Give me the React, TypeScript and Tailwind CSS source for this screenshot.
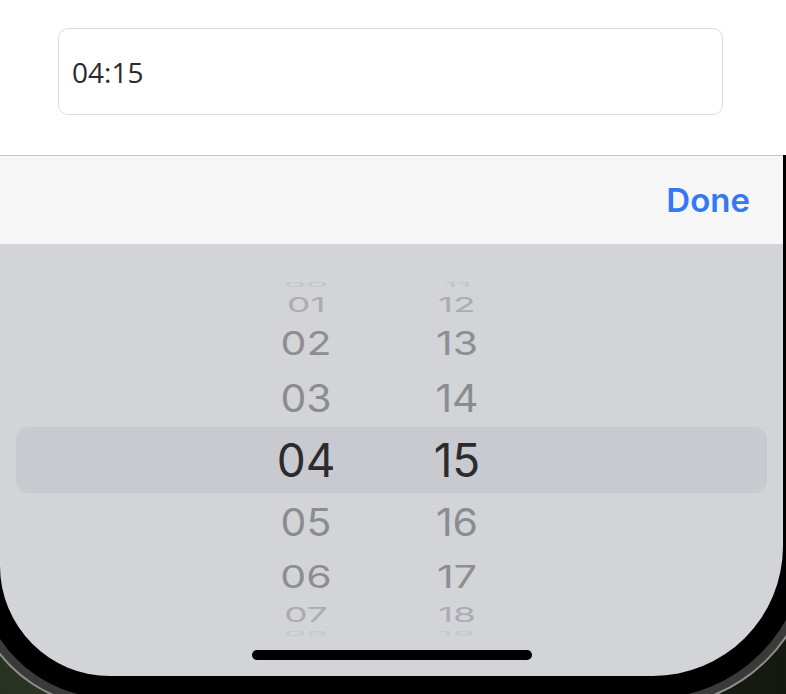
import React from "react";

type Row = { h: string; size: string; tf: string; color: string; a: string; b: string; sel?: boolean };

const rows: Row[] = [
  { h: "h-[12px]", size: "text-[38px]", tf: "scale-x-[0.92] scale-y-[0.16]", color: "text-[#c3c4c8]", a: "00", b: "11" },
  { h: "h-[26px]", size: "text-[39px]", tf: "scale-x-[0.95] scale-y-[0.52]", color: "text-[#abacb0]", a: "01", b: "12" },
  { h: "h-[52px]", size: "text-[41px]", tf: "scale-y-[0.79]", color: "text-[#8d8e92]", a: "02", b: "13" },
  { h: "h-[58px]", size: "text-[41px]", tf: "scale-y-[0.93]", color: "text-[#8b8c90]", a: "03", b: "14" },
  { h: "h-[66px]", size: "text-[46px]", tf: "", color: "text-[#2c2c2e]", a: "04", b: "15", sel: true },
  { h: "h-[58px]", size: "text-[41px]", tf: "scale-y-[0.93]", color: "text-[#8b8c90]", a: "05", b: "16" },
  { h: "h-[50px]", size: "text-[41px]", tf: "scale-y-[0.77]", color: "text-[#8d8e92]", a: "06", b: "17" },
  { h: "h-[26px]", size: "text-[39px]", tf: "scale-x-[0.95] scale-y-[0.52]", color: "text-[#abacb0]", a: "07", b: "18" },
  { h: "h-[14px]", size: "text-[38px]", tf: "scale-x-[0.92] scale-y-[0.16]", color: "text-[#c5c6ca]", a: "08", b: "19" },
];

function Cell({ text, r }: { text: string; r: Row }) {
  return (
    <div className="w-[100px] flex items-center justify-center">
      <span className={`${r.size} ${r.tf} ${r.color} leading-none inline-block`}>{text}</span>
    </div>
  );
}

export default function App() {
  return (
    <div className="w-[786px] h-[694px] overflow-hidden bg-[radial-gradient(circle_at_10%_100%,#2b3524_0%,#151a12_60%,#101410_100%)]">
      {/* thin light rim */}
      <div className="ml-[-32px] w-[847px] px-[2px] pb-[2px] bg-[#8e8f8c] rounded-bl-[142px] rounded-br-[162px]">
        {/* dark gray band */}
        <div className="px-[8px] pb-[8px] bg-[#3a3a3a] rounded-bl-[140px] rounded-br-[160px]">
          {/* black bezel */}
          <div className="px-[22px] pb-[22px] bg-black rounded-bl-[132px] rounded-br-[152px]">
            {/* screen */}
            <div className="w-[783px] h-[676px] bg-[#d3d4d8] rounded-bl-[110px] rounded-br-[130px] flex flex-col">
              {/* white area */}
              <div className="w-[786px] h-[155px] bg-white pt-[28px] pl-[58px]">
                <div className="w-[665px] h-[87px] border border-[#dcdcdc] rounded-[10px] flex items-center pl-[13px]">
                  <span className="text-[28px] text-[#2a2a2a] leading-none" style={{ fontFamily: '"Open Sans", sans-serif' }}>
                    04:15
                  </span>
                </div>
              </div>
              {/* toolbar */}
              <div className="h-[89px] border-t border-[#c8c8c8] bg-[#f6f6f6] flex items-center justify-end pr-[33px]">
                <span className="text-[33px] font-semibold text-[#3478f6] leading-none" style={{ fontFamily: "Inter, sans-serif" }}>
                  Done
                </span>
              </div>
              {/* picker */}
              <div className="pt-[35px] flex flex-col" style={{ fontFamily: "Inter, sans-serif" }}>
                {rows.map((r, i) => (
                  <div
                    key={i}
                    className={`${r.h} mx-[16px] flex items-center pl-[240px] gap-[51px] ${r.sel ? "bg-[#c9cacf] rounded-[12px]" : ""}`}
                  >
                    <Cell text={r.a} r={r} />
                    <Cell text={r.b} r={r} />
                  </div>
                ))}
                <div className="mt-[9px] mx-auto w-[280px] h-[10px] rounded-full bg-black" />
              </div>
            </div>
          </div>
        </div>
      </div>
    </div>
  );
}
